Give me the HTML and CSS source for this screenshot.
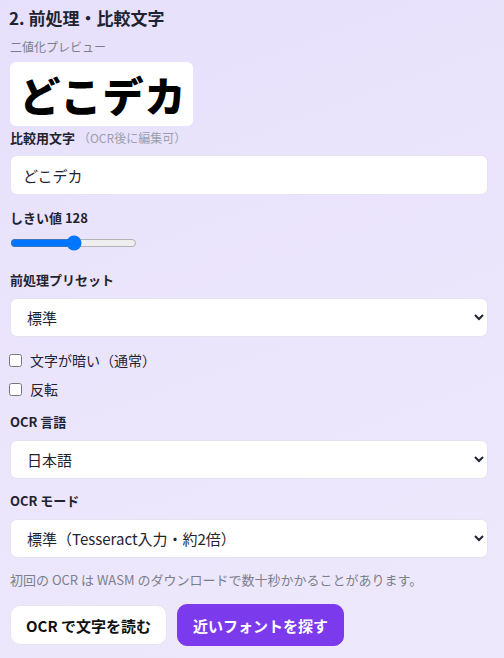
FILE: index.html
```html
<!DOCTYPE html>
<html lang="ja">
<head>
    <meta charset="UTF-8">
    <meta name="viewport" content="width=device-width, initial-scale=1.0">
    <title>前処理・比較文字</title>
    <link rel="stylesheet" href="styles.css">
</head>
<body>
    <section class="panel">
        <h2>2. 前処理・比較文字</h2>

        <div class="hint">二値化プレビュー</div>
        <div class="preview"><span>どこデカ</span></div>

        <label class="field-label first" for="compare">比較用文字 <small>（OCR後に編集可）</small></label>
        <input id="compare" class="text-input" type="text" value="どこデカ">

        <label class="field-label" for="threshold">しきい値 128</label>
        <input id="threshold" class="range" type="range" min="0" max="255" value="128">

        <label class="field-label" for="preset">前処理プリセット</label>
        <select id="preset" class="select">
            <option>標準</option>
            <option>高コントラスト</option>
            <option>ノイズ除去</option>
        </select>

        <label class="check"><input type="checkbox"> 文字が暗い（通常）</label>
        <label class="check"><input type="checkbox"> 反転</label>

        <label class="field-label" for="lang">OCR 言語</label>
        <select id="lang" class="select">
            <option>日本語</option>
            <option>英語</option>
        </select>

        <label class="field-label" for="mode">OCR モード</label>
        <select id="mode" class="select">
            <option>標準（Tesseract入力・約2倍）</option>
            <option>高速</option>
        </select>

        <p class="note">初回の OCR は WASM のダウンロードで数十秒かかることがあります。</p>

        <div class="actions">
            <button class="btn">OCR で文字を読む</button>
            <button class="btn primary">近いフォントを探す</button>
        </div>
    </section>
</body>
</html>
```

FILE: styles.css
```css
body {
    margin: 0;
    padding: 0;
    font-family: "Noto Sans CJK JP", "Noto Sans", sans-serif;
    color: #1f2430;
    background: linear-gradient(160deg, #e7e0fc 0%, #ece6fc 60%, #ede8fb 100%);
    min-height: 658px;
}

.panel {
    padding: 4px 16px 0 10px;
}

h2 {
    font-size: 17px;
    font-weight: 700;
    margin: 0 0 0 -1px;
    line-height: 28px;
}

.hint {
    font-size: 12px;
    color: #7b7f8c;
    margin-top: 6px;
    line-height: 18px;
}

.preview {
    width: 183px;
    height: 64px;
    background: #fff;
    border-radius: 6px;
    margin-top: 6px;
    display: flex;
    align-items: center;
    justify-content: center;
}

.preview span {
    font-size: 41px;
    font-weight: 900;
    color: #000;
    letter-spacing: 1px;
    line-height: 1;
    margin-left: 3px;
}

.field-label {
    display: block;
    font-size: 13px;
    font-weight: 700;
    line-height: 18px;
    margin-top: 13px;
}

.field-label.first {
    margin-top: 3px;
}

.field-label small {
    font-size: 12px;
    font-weight: 400;
    color: #9aa0ad;
}

.text-input,
.select {
    display: block;
    box-sizing: border-box;
    width: 100%;
    height: 40px;
    margin: 9px 0 0;
    border: 1px solid #e6e3f0;
    border-radius: 7px;
    background: #fff;
    font-family: inherit;
    font-size: 15px;
    color: #1f2430;
    padding: 0 12px;
}

.select {
    height: 39px;
}

.text-input {
    margin-bottom: 14px;
    margin-top: 8px;
}

.text-input + .field-label {
    margin-top: 14px;
}

.range {
    display: block;
    width: 127px;
    height: 16px;
    margin: 8px 0 0 0;
}

.range + .field-label {
    margin-top: 20px;
}

.check {
    display: flex;
    align-items: center;
    font-size: 14px;
    line-height: 20px;
    margin-top: 9px;
    margin-left: -1px;
}

.select + .check {
    margin-top: 13px;
}

.check input {
    margin: 0 8px 0 0;
    width: 13px;
    height: 13px;
}

.check + .field-label {
    margin-top: 14px;
}

.note {
    font-size: 13px;
    color: #7b7f8c;
    margin: 13px 0 16px;
    line-height: 18px;
}

.actions {
    display: flex;
    gap: 10px;
}

.btn {
    height: 40px;
    padding: 0 15px;
    border: 1px solid #e6e3f0;
    border-radius: 10px;
    background: #fff;
    color: #111;
    font-family: inherit;
    font-size: 15px;
    font-weight: 700;
}

.btn.primary {
    background: #7c3aed;
    border-color: #7c3aed;
    color: #fff;
    height: 42px;
    margin-top: -1px;
}
```
